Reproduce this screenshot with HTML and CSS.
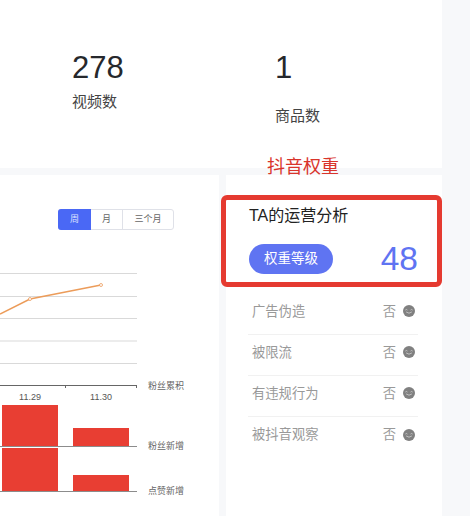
FILE: index.html
```html
<!DOCTYPE html>
<html lang="zh-CN">
<head>
    <meta charset="UTF-8">
    <title>抖音权重</title>
    <link rel="stylesheet" href="styles.css">
</head>
<body>
    <svg class="defs" width="0" height="0">
        <symbol id="face" viewBox="0 0 12 12">
            <circle cx="6" cy="6" r="6" fill="#808080"/>
            <path d="M2.600 4.800q.8-.9 1.600 0M7.800 4.800q.8-.9 1.600 0M3.400 7.200q2.600 2.200 5.200 0" fill="none" stroke="#d0d0d0" stroke-width=".8" stroke-linecap="round"/>
        </symbol>
    </svg>
    <div class="page">
        <section class="stats">
            <div class="stat stat-videos">
                <div class="stat-num">278</div>
                <div class="stat-label">视频数</div>
            </div>
            <div class="stat stat-goods">
                <div class="stat-num">1</div>
                <div class="stat-label">商品数</div>
            </div>
            <div class="note">抖音权重</div>
        </section>
        <section class="columns">
            <div class="card chart-card">
                <div class="tabs">
                    <span class="tab active">周</span>
                    <span class="tab tab-month">月</span>
                    <span class="tab tab-three">三个月</span>
                </div>
                <svg class="chart" width="219" height="341" viewBox="0 0 219 341">
                    <g class="grid">
                        <line x1="0" y1="98.500" x2="137" y2="98.500"/>
                        <line x1="0" y1="121.500" x2="137" y2="121.500"/>
                        <line x1="0" y1="143.500" x2="137" y2="143.500"/>
                        <line x1="0" y1="166" x2="137" y2="166"/>
                        <line x1="0" y1="188.500" x2="137" y2="188.500"/>
                    </g>
                    <polyline class="line" points="0,139 30,124 101,110"/>
                    <circle class="dot" cx="30" cy="124" r="1.500"/>
                    <circle class="dot" cx="101" cy="110" r="1.500"/>
                    <path class="axis" d="M0 210.500H137M65.500 210v3M136.500 210v3"/>
                    <text class="tick" x="30" y="225">11.29</text>
                    <text class="tick" x="101" y="225">11.30</text>
                    <rect class="bar" x="2" y="230" width="56" height="41"/>
                    <rect class="bar" x="73" y="253" width="56" height="18"/>
                    <line class="base" x1="0" y1="271.500" x2="137" y2="271.500"/>
                    <rect class="bar" x="2" y="273" width="56" height="43"/>
                    <rect class="bar" x="73" y="300" width="56" height="16"/>
                    <line class="base" x1="0" y1="316.500" x2="137" y2="316.500"/>
                    <text class="legend" x="148" y="213.500">粉丝累积</text>
                    <text class="legend" x="148" y="273.500">粉丝新增</text>
                    <text class="legend" x="148" y="318.500">点赞新增</text>
                </svg>
            </div>
            <div class="card side-card">
                <div class="highlight">
                    <div class="side-title">TA的运营分析</div>
                    <div class="level-row">
                        <span class="level-btn">权重等级</span>
                        <span class="level-num">48</span>
                    </div>
                </div>
                <ul class="checks">
                    <li><span>广告伪造</span><span class="no">否<svg class="face"><use href="#face"/></svg></span></li>
                    <li><span>被限流</span><span class="no">否<svg class="face"><use href="#face"/></svg></span></li>
                    <li><span>有违规行为</span><span class="no">否<svg class="face"><use href="#face"/></svg></span></li>
                    <li><span>被抖音观察</span><span class="no">否<svg class="face"><use href="#face"/></svg></span></li>
                </ul>
            </div>
        </section>
    </div>
</body>
</html>
```

FILE: styles.css
```css
* {
    box-sizing: border-box;
}
body {
    margin: 0;
    width: 470px;
    height: 516px;
    overflow: hidden;
    background-color: #f7f8fa;
    font-family: "Liberation Sans", "Noto Sans CJK SC", sans-serif;
    color: #333;
}
.defs {
    display: block;
}
.page {
    width: 442px;
}
.stats {
    position: relative;
    display: flex;
    height: 168px;
    background: #fff;
}
.stat {
    padding-top: 50px;
}
.stat-videos {
    margin-left: 72px;
    width: 203px;
}
.stat-num {
    font-size: 31px;
    line-height: 36px;
    color: #26282c;
}
.stat-label {
    font-size: 15px;
    line-height: 22px;
    margin-top: 5px;
    color: #444;
}
.stat-goods .stat-label {
    margin-top: 19px;
}
.note {
    position: absolute;
    left: 267px;
    top: 155px;
    font-size: 18px;
    line-height: 24px;
    color: #d9342b;
}
.columns {
    display: flex;
    gap: 7px;
    margin-top: 7px;
}
.card {
    background: #fff;
    height: 341px;
}
.chart-card {
    position: relative;
    width: 219px;
}
.tabs {
    position: absolute;
    left: 58px;
    top: 34px;
    display: flex;
    height: 21px;
    border: 1px solid #dfe1e8;
    border-radius: 3px;
    font-size: 9px;
    line-height: 19px;
    color: #666;
    text-align: center;
}
.tab {
    display: block;
}
.tab.active {
    width: 33px;
    margin: -1px 0 -1px -1px;
    line-height: 21px;
    border-radius: 3px 0 0 3px;
    background: #4a68f5;
    color: #dfe4ff;
}
.tab-month {
    width: 32px;
    border-right: 1px solid #dfe1e8;
}
.tab-three {
    width: 50px;
}
.chart {
    display: block;
}
.grid line {
    stroke: #d9d9d9;
    stroke-width: 1;
}
.line {
    fill: none;
    stroke: #ec9c5a;
    stroke-width: 1.5;
}
.dot {
    fill: #fff;
    stroke: #ec9c5a;
    stroke-width: 0.8;
}
.axis {
    fill: none;
    stroke: #666;
    stroke-width: 1;
}
.base {
    stroke: #8c8c8c;
    stroke-width: 1;
}
.bar {
    fill: #e83e33;
}
.tick {
    font-size: 9px;
    fill: #555;
    text-anchor: middle;
}
.legend {
    font-size: 9px;
    fill: #666;
}
.side-card {
    position: relative;
    width: 216px;
    padding-top: 20px;
}
.highlight {
    height: 92px;
    margin-left: -5px;
    padding: 5px 0 0 23px;
    border: 5px solid #e53a30;
    border-radius: 6px;
}
.side-title {
    font-size: 16px;
    line-height: 22px;
    color: #222;
}
.level-row {
    display: flex;
    justify-content: space-between;
    align-items: center;
    padding-right: 19px;
    margin-top: 14px;
}
.level-btn {
    width: 84px;
    height: 30px;
    border-radius: 15px;
    background: #5f74f2;
    color: #fff;
    font-size: 13.5px;
    line-height: 30px;
    text-align: center;
}
.level-num {
    font-size: 33.500px;
    line-height: 36px;
    color: #5f74f2;
}
.checks {
    list-style: none;
    margin: 7px 24px 0 22px;
    padding: 0;
}
.checks li {
    display: flex;
    justify-content: space-between;
    align-items: center;
    height: 41px;
    padding: 0 3px 8px 4px;
    border-bottom: 1px solid #f1f1f1;
    font-size: 13.3px;
    color: #999;
}
.checks li:last-child {
    border-bottom: none;
}
.no {
    display: flex;
    align-items: center;
    gap: 7px;
}
.face {
    display: block;
    width: 12px;
    height: 12px;
    margin-top: 2px;
}
```
